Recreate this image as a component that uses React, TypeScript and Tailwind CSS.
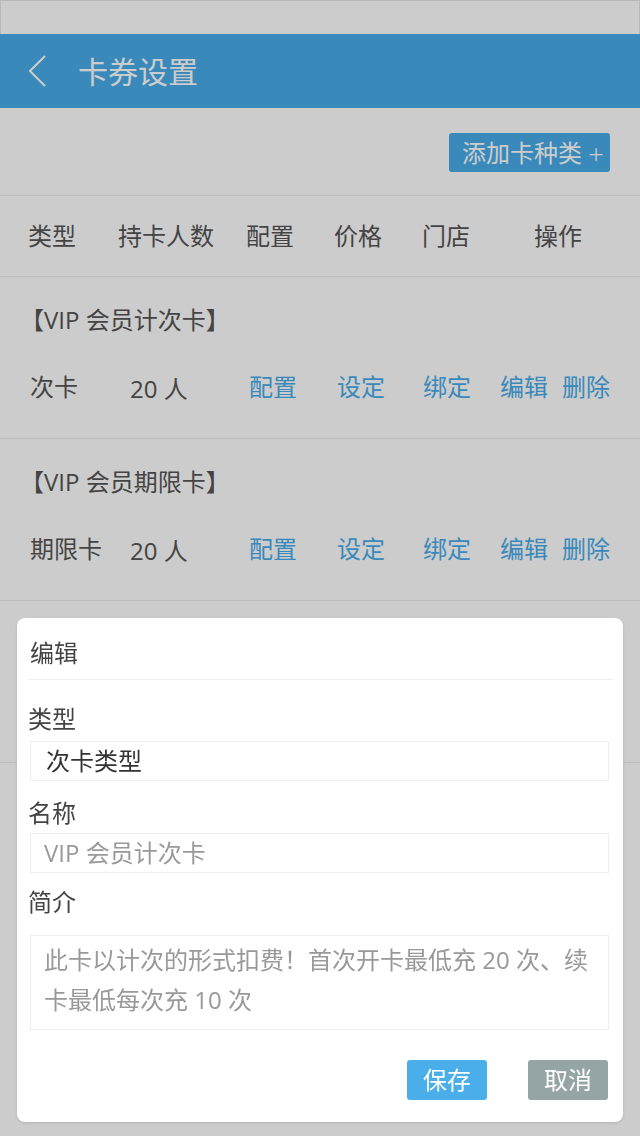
import React from 'react';

const font = "font-['Open_Sans','Noto_Sans_CJK_SC',sans-serif]";

type CardRow = {
  title: string;
  kind: string;
  count: string;
};

const cards: CardRow[] = [
  { title: '【VIP 会员计次卡】', kind: '次卡', count: '20 人' },
  { title: '【VIP 会员期限卡】', kind: '期限卡', count: '20 人' },
];

function BackIcon() {
  return (
    <svg width="17" height="32" viewBox="0 0 17 32" fill="none">
      <polyline points="16,1 1,16 16,31" stroke="#ffffff" strokeWidth="2" />
    </svg>
  );
}

function CardSection({ card }: { card: CardRow }) {
  return (
    <div className="h-[162px] border-b border-[#ececec] flex flex-col">
      <div className="mt-[31px] pl-[20px] h-[24px] leading-[24px] text-[24px] text-[#555]">{card.title}</div>
      <div className="mt-[43px] h-[24px] flex items-center text-[24px] leading-[24px] whitespace-nowrap">
        <span className="w-[130px] pl-[30px] text-[#555]">{card.kind}</span>
        <span className="w-[119px] mt-[4px] text-[#555]">{card.count}</span>
        <span className="w-[88px] text-[#48acea]">配置</span>
        <span className="w-[86px] text-[#48acea]">设定</span>
        <span className="w-[77px] text-[#48acea]">绑定</span>
        <span className="w-[62px] text-[#48acea]">编辑</span>
        <span className="text-[#48acea]">删除</span>
      </div>
    </div>
  );
}

function EditModal() {
  return (
    <div className="absolute left-[17px] top-[618px] w-[606px] bg-white rounded-[8px] shadow-[0_1px_3px_rgba(0,0,0,0.12)] pb-[22px]">
      <div className="mx-[11px] mr-[10px] h-[62px] border-b border-[#eeeeee] flex items-center pt-[8px] pl-[2px] text-[24px] text-[#444]">
        编辑
      </div>
      <div className="ml-[11px] mt-[27px] h-[24px] leading-[24px] text-[24px] text-[#444]">类型</div>
      <div className="ml-[13px] mr-[14px] mt-[10px] h-[40px] border border-[#eeeeee] flex items-center pl-[15px] text-[24px] text-[#333]">
        次卡类型
      </div>
      <div className="ml-[11px] mt-[20px] h-[24px] leading-[24px] text-[24px] text-[#444]">名称</div>
      <div className="ml-[13px] mr-[14px] mt-[8px] h-[40px] border border-[#eeeeee] flex items-center pl-[13px] text-[24px] text-[#999]">
        VIP 会员计次卡
      </div>
      <div className="ml-[11px] mt-[17px] h-[24px] leading-[24px] text-[24px] text-[#444]">简介</div>
      <div className="ml-[13px] mr-[14px] mt-[21px] h-[95px] border border-[#eeeeee] pt-[4px] pl-[13px] pr-[12px] text-[24px] leading-[40px] text-[#999]">
        此卡以计次的形式扣费！首次开卡最低充 20 次、续卡最低每次充 10 次
      </div>
      <div className="mt-[30px] mr-[15px] flex justify-end gap-[41px]">
        <button className="w-[80px] h-[40px] rounded-[3px] bg-[#4aaeea] text-white text-[24px] leading-[40px]">保存</button>
        <button className="w-[80px] h-[40px] rounded-[3px] bg-[#95a5a6] text-white text-[24px] leading-[40px]">取消</button>
      </div>
    </div>
  );
}

export default function App() {
  return (
    <div className={`relative w-[640px] min-h-[1136px] bg-white ${font}`}>
      <div className="h-[34px] border-x border-t border-[#e6e6e6] bg-white" />
      <header className="h-[74px] bg-[#48acea] flex items-center">
        <div className="ml-[29px] w-[49px] flex items-center">
          <BackIcon />
        </div>
        <h1 className="text-[30px] text-white font-normal">卡券设置</h1>
      </header>
      <div className="h-[88px] border-b border-[#ececec] flex justify-end items-start pt-[25px] pr-[30px]">
        <button className="h-[39px] w-[161px] rounded-[3px] bg-[#48acea] text-white text-[24px] flex items-center pl-[13px]">
          添加卡种类<span className="ml-[6px] text-[28px] font-light leading-none">+</span>
        </button>
      </div>
      <div className="h-[81px] border-b border-[#ececec] flex items-center text-[24px] text-[#555]">
        <span className="w-[118px] pl-[28px]">类型</span>
        <span className="w-[128px]">持卡人数</span>
        <span className="w-[88px]">配置</span>
        <span className="w-[88px]">价格</span>
        <span className="w-[112px]">门店</span>
        <span>操作</span>
      </div>
      {cards.map((c) => (
        <CardSection key={c.title} card={c} />
      ))}
      <div className="h-[162px] border-b border-[#ececec]" />
      <div className="fixed inset-0 bg-black/20" />
      <EditModal />
    </div>
  );
}
